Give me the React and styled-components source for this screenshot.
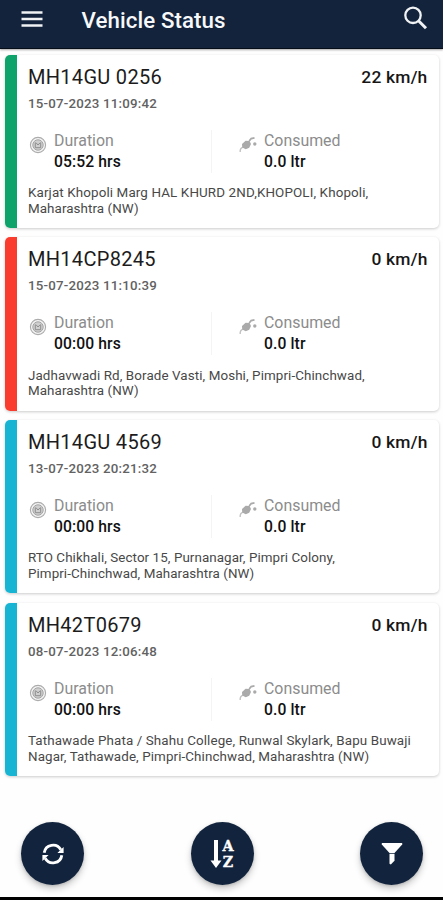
import React from "react";
import styled, { createGlobalStyle } from "styled-components";

const GlobalStyle = createGlobalStyle`
  * { box-sizing: border-box; }
  body { margin: 0; background: #fff; font-family: Roboto, "Liberation Sans", sans-serif; }
`;

const Screen = styled.div`
  display: flex;
  flex-direction: column;
  height: 900px;
  overflow: hidden;
  background: #fefefe;
  border-bottom: 3px solid #000;
`;

const AppBar = styled.header`
  display: flex;
  flex: none;
  align-items: flex-start;
  height: 49px;
  padding: 0 14px 0 21px;
  background: #13233c;
  border-bottom: 1px solid #050d18;
  box-shadow: 0 1px 2px rgba(0, 0, 0, 0.35);
`;

const MenuIcon = styled.svg`
  flex: none;
  margin-top: 10px;
`;

const PageTitle = styled.h1`
  flex: 1;
  margin: 7px 0 0 38.5px;
  color: #f7f8fa;
  font-size: 22.3px;
  font-weight: 500;
  line-height: 26px;
  letter-spacing: 0.08px;
`;

const SearchIcon = styled.svg`
  flex: none;
  margin-top: 5px;
`;

const CardList = styled.main`
  display: flex;
  flex: none;
  flex-direction: column;
  gap: 9.2px;
  padding: 5.5px 4px 0 5px;
`;

const Card = styled.article`
  display: flex;
  height: 173.5px;
  overflow: hidden;
  background: #fff;
  border-radius: 5px;
  box-shadow: 0 1px 3px rgba(0, 0, 0, 0.2);
`;

const StatusBar = styled.div`
  flex: none;
  width: 12px;
  background: ${(p) => p.$color};
`;

const CardBody = styled.div`
  flex: 1;
  min-width: 0;
  padding: 10.3px 11.5px 0 11px;
`;

const CardHeader = styled.div`
  display: flex;
  justify-content: space-between;
  line-height: 24px;
`;

const Plate = styled.h2`
  margin: 0;
  color: #1c1c1c;
  font-size: 20px;
  font-weight: 400;
  letter-spacing: 0.3px;
`;

const Speed = styled.div`
  color: #161616;
  font-size: 17.4px;
  font-weight: 500;
  letter-spacing: 0.2px;
`;

const Timestamp = styled.div`
  margin-top: 6.9px;
  color: #626262;
  font-size: 13.3px;
  font-weight: 500;
  line-height: 16px;
  letter-spacing: 0.2px;
`;

const Stats = styled.div`
  display: grid;
  grid-template-columns: 184px 1fr;
  margin-top: 18px;
`;

const Stat = styled.div`
  display: flex;
  height: 43px;
  padding-left: ${(p) => p.$inset}px;
  border-right: ${(p) => (p.$divided ? "1px solid #f4f4f4" : "0")};
`;

const StatIcon = styled.svg`
  flex: none;
  margin: 6px 7px 0 0;
`;

const StatLabel = styled.div`
  color: #8c8c8c;
  font-size: 15.9px;
  line-height: 21px;
`;

const StatValue = styled.div`
  color: #111;
  font-size: 15.7px;
  font-weight: 500;
  line-height: 22px;
  letter-spacing: 0.1px;
`;

const Address = styled.p`
  margin: 12.3px 0 0;
  color: #484848;
  font-size: 13.4px;
  line-height: 15.8px;
  white-space: nowrap;
`;

const AddressLine = styled.span`
  display: block;
  letter-spacing: ${(p) => p.$spacing}px;
`;

const Actions = styled.nav`
  display: flex;
  justify-content: space-between;
  margin-top: auto;
  padding: 0 20px 12px 21px;
`;

const RoundButton = styled.button`
  display: flex;
  align-items: center;
  justify-content: center;
  width: 63px;
  height: 63px;
  padding: 0;
  border: 0;
  border-radius: 50%;
  background: #12243d;
  box-shadow: 0 4px 7px rgba(0, 0, 0, 0.2), 0 1px 3px rgba(0, 0, 0, 0.15);
`;

const SortGlyph = styled.div`
  display: flex;
  align-items: center;
`;

const SortLetters = styled.div`
  color: #fff;
  font-family: "DejaVu Serif", serif;
  font-size: 15.5px;
  font-weight: 700;
  line-height: 16px;
  text-align: center;
  transform: scaleX(0.92);
  -webkit-text-stroke: 0.4px #fff;
`;

const vehicles = [
  {
    plate: "MH14GU 0256", time: "15-07-2023 11:09:42", speed: "22 km/h",
    duration: "05:52 hrs", color: "#0fa36c",
    address: [["Karjat Khopoli Marg HAL KHURD 2ND,KHOPOLI, Khopoli,", 0.12], ["Maharashtra (NW)", 0.07]],
  },
  {
    plate: "MH14CP8245", time: "15-07-2023 11:10:39", speed: "0 km/h",
    duration: "00:00 hrs", color: "#fa3c2f",
    address: [["Jadhavwadi Rd, Borade Vasti, Moshi, Pimpri-Chinchwad,", 0.09], ["Maharashtra (NW)", 0.07]],
  },
  {
    plate: "MH14GU 4569", time: "13-07-2023 20:21:32", speed: "0 km/h",
    duration: "00:00 hrs", color: "#18b4d3",
    address: [["RTO Chikhali, Sector 15, Purnanagar, Pimpri Colony,", 0.07], ["Pimpri-Chinchwad, Maharashtra (NW)", 0.07]],
  },
  {
    plate: "MH42T0679", time: "08-07-2023 12:06:48", speed: "0 km/h",
    duration: "00:00 hrs", color: "#18b4d3",
    address: [["Tathawade Phata / Shahu College, Runwal Skylark, Bapu Buwaji", 0.11], ["Nagar, Tathawade, Pimpri-Chinchwad, Maharashtra (NW)", 0.09]],
  },
];

function DurationIcon() {
  return (
    <StatIcon width="18" height="18" viewBox="0 0 18 18" fill="none">
      <circle cx="9" cy="9" r="7.6" fill="#f3f3f3" stroke="#acacac" strokeWidth="1.1" />
      <circle cx="9" cy="9" r="5.2" fill="#cfcfcf" stroke="#a4a4a4" strokeWidth="1" />
      <path d="M6.3 6.5v5.2h5.4V6.5M7 6.7 9 9l2.2-2.3" stroke="#8e8e8e" strokeWidth="1" />
    </StatIcon>
  );
}

function FuelIcon() {
  return (
    <StatIcon width="18" height="18" viewBox="0 0 18 18" fill="none">
      <path d="M1.2 16c-.2-2.2.7-4 2.6-4.8" stroke="#c2c2c2" strokeWidth="1.4" />
      <path d="m3 8 3.6-3.2 4 .3 1.4 2.9-1.8 3.8-3.4 1.5-3.6-1.7z" fill="#aaa" />
      <path d="m10.2 5 2-2.5 3.3-.6" stroke="#aaa" strokeWidth="1.8" />
      <circle cx="15.8" cy="8" r="1.7" fill="#aaa" />
    </StatIcon>
  );
}

function RefreshGlyph() {
  return (
    <svg width="24" height="24" viewBox="0 0 24 24" fill="none">
      <path d="M3.2 10.8A8.9 8.9 0 0 1 19.8 7.7" stroke="#fff" strokeWidth="2.8" />
      <path d="M20.8 13.2A8.900 8.900 0 0 1 4.2 16.3" stroke="#fff" strokeWidth="2.8" />
      <path d="M22.6 5v5.9h-6.200zM1.4 19v-5.900h6.200z" fill="#fff" />
    </svg>
  );
}

function FilterGlyph() {
  return (
    <svg width="22" height="24" viewBox="0 0 22 24">
      <path d="M.8 1h20.4v1.5L13.5 11h-5L.8 2.5z" fill="#fff" />
      <path d="M8.5 11.7h5v7L9.8 22.5l-1.3-.8z" fill="#fff" />
    </svg>
  );
}

function VehicleCard({ vehicle }) {
  return (
    <Card>
      <StatusBar $color={vehicle.color} />
      <CardBody>
        <CardHeader>
          <Plate>{vehicle.plate}</Plate>
          <Speed>{vehicle.speed}</Speed>
        </CardHeader>
        <Timestamp>{vehicle.time}</Timestamp>
        <Stats>
          <Stat $inset={1} $divided>
            <DurationIcon />
            <div>
              <StatLabel>Duration</StatLabel>
              <StatValue>{vehicle.duration}</StatValue>
            </div>
          </Stat>
          <Stat $inset={27}>
            <FuelIcon />
            <div>
              <StatLabel>Consumed</StatLabel>
              <StatValue>0.0 ltr</StatValue>
            </div>
          </Stat>
        </Stats>
        <Address>
          {vehicle.address.map(([text, spacing]) => (
            <AddressLine key={text} $spacing={spacing}>{text}</AddressLine>
          ))}
        </Address>
      </CardBody>
    </Card>
  );
}

export default function App() {
  return (
    <>
      <GlobalStyle />
      <Screen>
        <AppBar>
          <MenuIcon width="22" height="18" viewBox="0 0 22 18">
            <path d="M.5 2.5h21M.5 9h21M.5 15.5h21" stroke="#f0f2f3" strokeWidth="2.5" />
          </MenuIcon>
          <PageTitle>Vehicle Status</PageTitle>
          <SearchIcon width="26" height="26" viewBox="0 0 26 26" fill="none">
            <circle cx="10" cy="10.3" r="7.7" stroke="#f0f2f3" strokeWidth="2.3" />
            <path d="m15.5 15.8 7.5 7.5" stroke="#f0f2f3" strokeWidth="3" />
          </SearchIcon>
        </AppBar>
        <CardList>
          {vehicles.map((v) => <VehicleCard key={v.plate} vehicle={v} />)}
        </CardList>
        <Actions>
          <RoundButton aria-label="Refresh"><RefreshGlyph /></RoundButton>
          <RoundButton aria-label="Sort">
            <SortGlyph>
              <svg width="12" height="30" viewBox="0 0 12 30">
                <path d="M4 1h4v20.5h3.500L6 29 .5 21.500H4z" fill="#fff" />
              </svg>
              <SortLetters><div>A</div><div>Z</div></SortLetters>
            </SortGlyph>
          </RoundButton>
          <RoundButton aria-label="Filter"><FilterGlyph /></RoundButton>
        </Actions>
      </Screen>
    </>
  );
}
